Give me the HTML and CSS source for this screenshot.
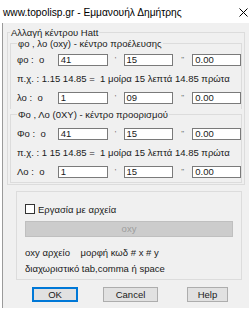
FILE: index.html
```html
<!DOCTYPE html>
<html lang="el">
<head>
<meta charset="utf-8">
<title>Hatt</title>
<link rel="stylesheet" href="styles.css">
</head>
<body>
<div class="window">
  <div class="titlebar">
    <span class="title">www.topolisp.gr - Εμμανουήλ Δημήτρης</span>
    <svg class="close" width="9" height="9" viewBox="0 0 9 9"><path d="M0.5 0.5 L8.5 8.5 M8.5 0.5 L0.5 8.5" stroke="#000" stroke-width="1"/></svg>
  </div>
  <div class="client">
    <fieldset class="group outer">
      <legend>Αλλαγή κέντρου Hatt</legend>
      <fieldset class="group inner first">
        <legend>φο , λο (oxy) - κέντρο προέλευσης</legend>
        <div class="rows">
          <div class="row">
            <span class="lbl">φο :  ο</span>
            <span class="field">41</span><span class="sep s1">'</span>
            <span class="field">15</span><span class="sep s2">"</span>
            <span class="field f3">0.00</span>
          </div>
          <div class="hint">π.χ. : 1.15 14.85 =  1 μοίρα 15 λεπτά 14.85 πρώτα</div>
          <div class="row">
            <span class="lbl">λο :  ο</span>
            <span class="field">1</span><span class="sep s1">'</span>
            <span class="field">09</span><span class="sep s2">"</span>
            <span class="field f3">0.00</span>
          </div>
        </div>
      </fieldset>
      <fieldset class="group inner second">
        <legend>Φο , Λο (0XY) - κέντρο προορισμού</legend>
        <div class="rows">
          <div class="row">
            <span class="lbl">Φο :  ο</span>
            <span class="field">41</span><span class="sep s1">'</span>
            <span class="field">15</span><span class="sep s2">"</span>
            <span class="field f3">0.00</span>
          </div>
          <div class="hint">π.χ. : 1 15 14.85 =  1 μοίρα 15 λεπτά 14.85 πρώτα</div>
          <div class="row">
            <span class="lbl">Λο :  ο</span>
            <span class="field">1</span><span class="sep s1">'</span>
            <span class="field">15</span><span class="sep s2">"</span>
            <span class="field f3">0.00</span>
          </div>
        </div>
      </fieldset>
    </fieldset>
    <div class="group files">
      <div class="check"><span class="box"></span><span>Εργασία με αρχεία</span></div>
      <div class="oxybtn">oxy</div>
      <div class="line l1">oxy αρχείο    μορφή κωδ # x # y</div>
      <div class="line l2">διαχωριστικό tab,comma ή space</div>
    </div>
    <div class="buttons">
      <div class="btn ok">OK</div>
      <div class="btn cancel">Cancel</div>
      <div class="btn help">Help</div>
    </div>
  </div>
</div>
</body>
</html>
```
FILE: styles.css
```css
html, body {
  margin: 0;
  padding: 0;
  background: #ffffff;
}
body {
  font-family: "Liberation Sans", Arial, sans-serif;
  font-size: 9.5px;
  color: #1a1a1a;
  width: 249px;
  height: 319px;
  overflow: hidden;
}
.window {
  width: 249px;
}
.titlebar {
  height: 23px;
  display: flex;
  align-items: center;
  justify-content: space-between;
  padding-left: 3px;
  padding-right: 1px;
  box-sizing: border-box;
  background: #fff;
}
.title {
  font-size: 10.2px;
  line-height: 13px;
  margin-top: 2px;
  white-space: nowrap;
  color: #000;
}
.close {
  margin-top: 2px;
}
.client {
  margin-left: 2px;
  border-left: 1px solid #9a9a9a;
  background: #f0f0f0;
  padding: 4px 4px 6px 4px;
}
fieldset.group {
  margin: 0;
  min-width: 0;
  border: 1px solid #dcdcdc;
  padding: 0 2px 1px 2px;
}
fieldset.group legend {
  padding: 0 1px;
  line-height: 11px;
  font-size: 9.5px;
  white-space: nowrap;
}
.inner {
  margin-top: 4px;
}
fieldset.group.inner {
  padding: 0 0 0 6px;
}
fieldset.group.first {
  border-bottom: none;
  padding-top: 5px;
  padding-bottom: 5px;
}
fieldset.group.second {
  margin-top: 0;
  padding-top: 8px;
  padding-bottom: 4px;
}
.rows {
  display: flex;
  flex-direction: column;
  gap: 7px;
}
.row {
  display: flex;
  align-items: center;
  height: 12px;
}
.lbl {
  width: 41px;
  white-space: pre;
  line-height: 12px;
}
.field {
  width: 50px;
  height: 12px;
  box-sizing: border-box;
  border: 1px solid #7a7a7a;
  background: #fff;
  line-height: 10px;
  padding-left: 2px;
}
.field.f3 {
  width: 49px;
}
.sep {
  text-align: center;
  color: #666;
  font-size: 8px;
  line-height: 12px;
}
.sep.s1 { width: 16px; }
.sep.s2 { width: 19px; }
.hint {
  height: 12px;
  line-height: 12px;
  white-space: pre;
}
.files {
  margin: 6px 3px 0 9px;
  border: 1px solid #dcdcdc;
  padding: 11px 8px 4px 8px;
  display: flex;
  flex-direction: column;
}
.check {
  display: flex;
  align-items: center;
  height: 12px;
  gap: 3px;
}
.box {
  width: 10px;
  height: 10px;
  box-sizing: border-box;
  border: 1px solid #333;
  background: #fff;
}
.oxybtn {
  margin-top: 6px;
  height: 16px;
  box-sizing: border-box;
  background: #cccccc;
  border: 1px solid #bfbfbf;
  color: #9d9d9d;
  text-align: center;
  line-height: 14px;
}
.line {
  height: 12px;
  line-height: 12px;
  white-space: pre;
}
.l1 { margin-top: 10px; }
.l2 { margin-top: 4px; }
.buttons {
  display: flex;
  margin-top: 7px;
  padding-left: 25px;
}
.btn {
  height: 15px;
  box-sizing: border-box;
  background: #e1e1e1;
  border: 1px solid #adadad;
  text-align: center;
  line-height: 13px;
  font-size: 9.5px;
}
.btn.ok {
  width: 46px;
  border-color: #0078d7;
  box-shadow: inset 0 0 0 1px #0078d7;
}
.btn.cancel {
  width: 55px;
  margin-left: 25px;
}
.btn.help {
  width: 41px;
  margin-left: 29px;
}
```
